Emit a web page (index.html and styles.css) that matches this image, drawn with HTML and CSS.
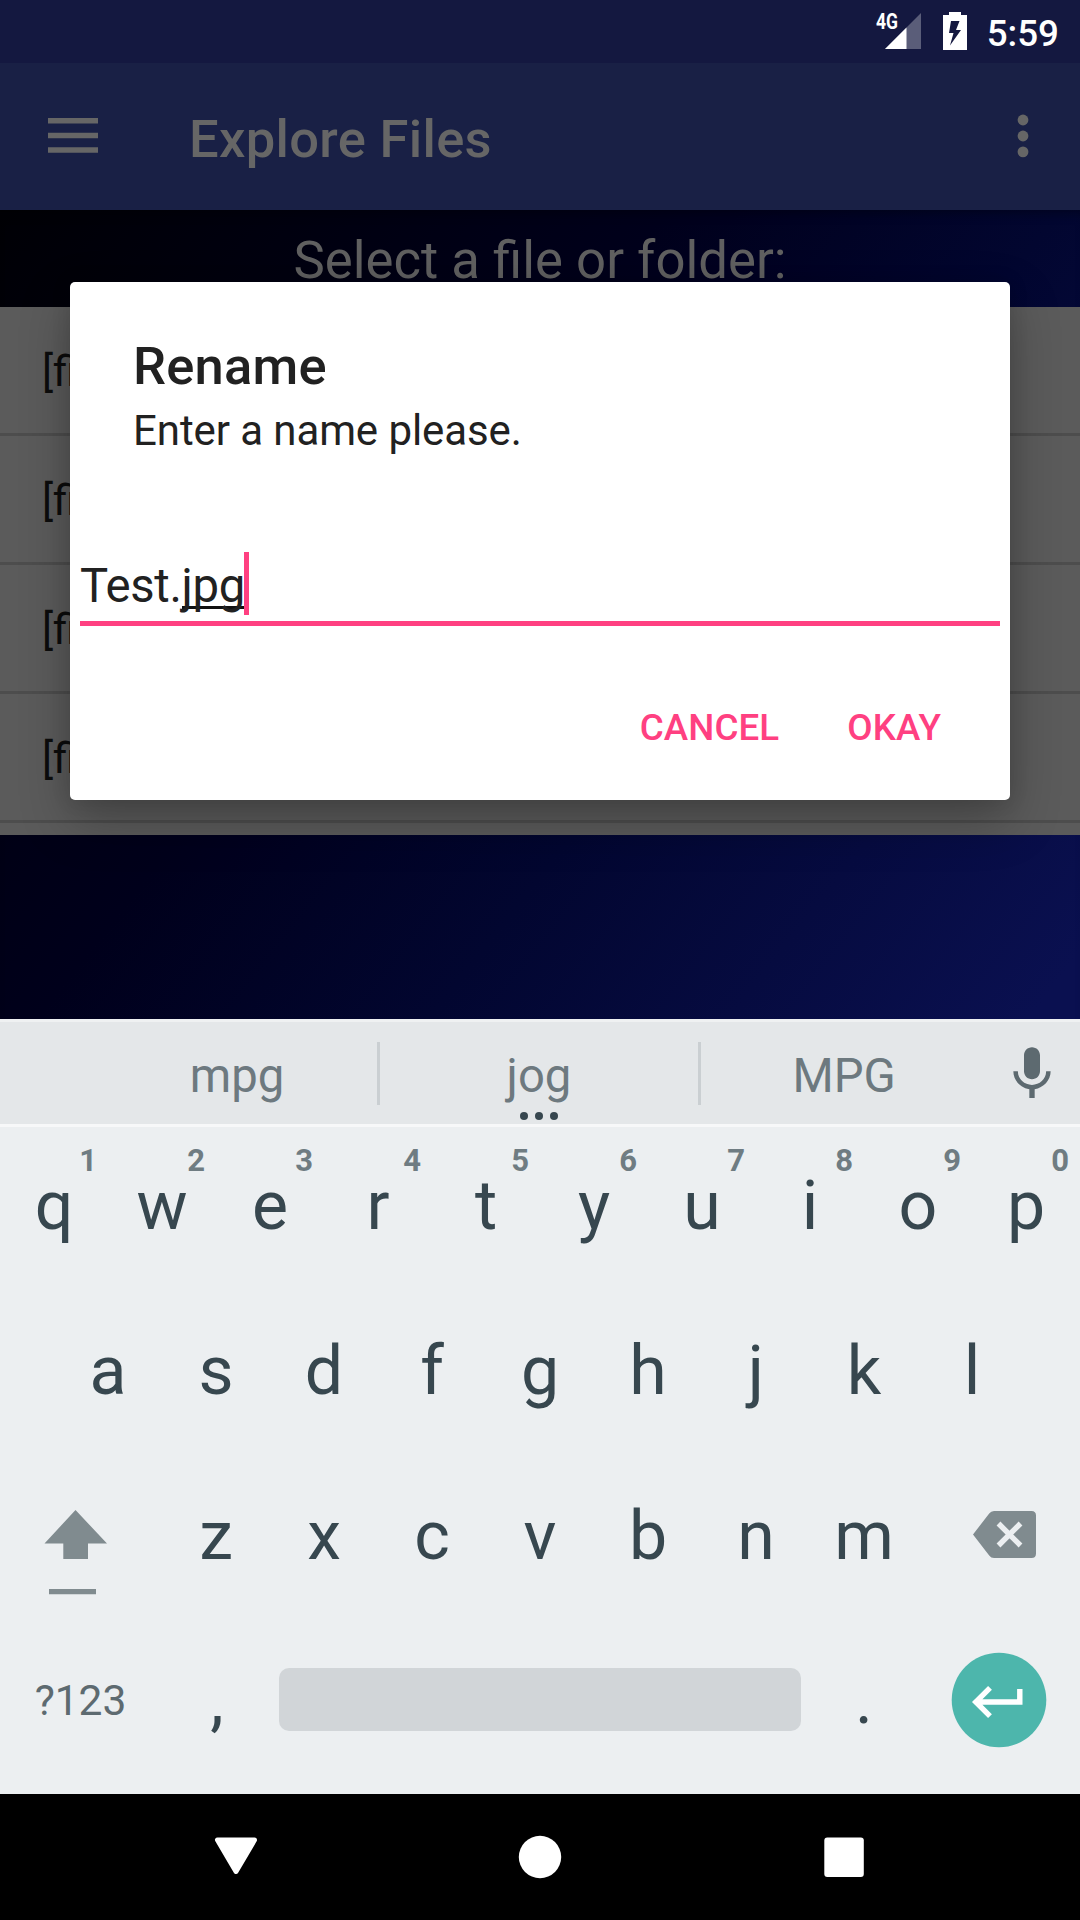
FILE: index.html
```html
<!DOCTYPE html>
<html lang="en">
<head>
<meta charset="utf-8">
<title>Explore Files</title>
<link rel="stylesheet" href="styles.css">
</head>
<body>
<div class="screen">
  <header class="status-bar">
    <svg class="signal" width="48" height="48" viewBox="0 -8 48 48">
      <path d="M46 1V37H10Z" fill="#fff" fill-opacity=".3"/>
      <path d="M31.5 15.5V37H10Z" fill="#fff"/>
      <text class="signal-label" x="1" y="17" textLength="22" lengthAdjust="spacingAndGlyphs">4G</text>
    </svg>
    <svg class="battery" width="24" height="38" viewBox="0 0 24 38">
      <path d="M0 3H6V0H18V3H24V38H0ZM8 9L6 21H10.500L7 33.500L18 18H13L16.500 9Z" fill="#fff" fill-rule="evenodd"/>
    </svg>
    <span class="clock">5:59</span>
  </header>

  <div class="toolbar">
    <svg class="menu-icon" width="50" height="35" viewBox="0 0 50 35"><path d="M0 0H50V5.500H0ZM0 14.700H50V20.200H0ZM0 29.300H50V34.800H0Z" fill="#666"/></svg>
    <h1 class="toolbar-title">Explore Files</h1>
    <svg class="more-icon" width="12" height="44" viewBox="0 0 12 44"><g fill="#666"><circle cx="6" cy="6" r="5.400"/><circle cx="6" cy="22" r="5.400"/><circle cx="6" cy="37.900" r="5.400"/></g></svg>
  </div>

  <main class="content">
    <p class="prompt">Select a file or folder:</p>
    <ul class="file-list">
      <li class="file-row">[fi</li>
      <li class="file-row">[fi</li>
      <li class="file-row">[fi</li>
      <li class="file-row">[fi</li>
    </ul>

    <section class="dialog">
      <h2 class="dialog-title">Rename</h2>
      <p class="dialog-message">Enter a name please.</p>
      <div class="field"><span>Test.</span><span class="composing">jpg</span><i class="caret"></i></div>
      <div class="dialog-actions"><span>CANCEL</span><span>OKAY</span></div>
    </section>
  </main>

  <div class="keyboard">
    <div class="suggestions">
      <span class="word word-left">mpg</span>
      <span class="word word-mid">jog
        <svg class="more-words" width="40" height="10" viewBox="0 0 40 10"><g fill="#37474f"><circle cx="5" cy="5" r="4"/><circle cx="20" cy="5" r="4"/><circle cx="35" cy="5" r="4"/></g></svg>
      </span>
      <span class="word word-right">MPG</span>
      <svg class="mic" width="64" height="64" viewBox="0 0 24 24" fill="#5d6a70"><path d="M12 14c1.660 0 3-1.340 3-3V5c0-1.660-1.340-3-3-3S9 3.340 9 5v6c0 1.660 1.340 3 3 3zM17.300 11c0 3-2.540 5.100-5.300 5.100S6.700 14 6.700 11H5c0 3.410 2.720 6.230 6 6.720V21h2v-3.280c3.280-.480 6-3.300 6-6.720h-1.700z"/></svg>
    </div>

    <div class="key-row row-top">
      <span class="key">q<sup class="hint">1</sup></span><span class="key">w<sup class="hint">2</sup></span><span class="key">e<sup class="hint">3</sup></span><span class="key">r<sup class="hint">4</sup></span><span class="key">t<sup class="hint">5</sup></span><span class="key">y<sup class="hint">6</sup></span><span class="key">u<sup class="hint">7</sup></span><span class="key">i<sup class="hint">8</sup></span><span class="key">o<sup class="hint">9</sup></span><span class="key">p<sup class="hint">0</sup></span>
    </div>
    <div class="key-row">
      <span class="key">a</span><span class="key">s</span><span class="key">d</span><span class="key">f</span><span class="key">g</span><span class="key">h</span><span class="key">j</span><span class="key">k</span><span class="key">l</span>
    </div>
    <div class="key-row">
      <span class="key key-side"><svg width="162" height="165" viewBox="0 0 162 165" fill="#808b8f"><path d="M75.500 57L107 90.500H88V106H63.300V90.500H44.500Z"/><path d="M49 136H96V141.300H49Z"/></svg></span>
      <span class="key">z</span><span class="key">x</span><span class="key">c</span><span class="key">v</span><span class="key">b</span><span class="key">n</span><span class="key">m</span>
      <span class="key key-side"><svg width="162" height="165" viewBox="0 0 162 165"><path d="M76 58H113.500Q118 58 118 62.500V100.500Q118 105 113.500 105H76Q73 105 71.200 102.500L55 81.500L71.200 60.500Q73 58 76 58Z" fill="#808b8f"/><path d="M80.500 70.500L102.500 92.500M102.500 70.500L80.500 92.500" stroke="#eceff1" stroke-width="5.400"/></svg></span>
    </div>
    <div class="key-row row-bottom">
      <span class="key key-symbols">?123</span>
      <span class="key key-comma">,</span>
      <span class="key key-space"><i class="space-bar"></i></span>
      <span class="key">.</span>
      <span class="key key-side"><svg width="162" height="165" viewBox="0 0 162 165"><circle cx="81" cy="82" r="47.300" fill="#4db6ac"/><path d="M101.800 71V84H58M72 69.800L57.800 84L72 98.200" fill="none" stroke="#fff" stroke-width="5.400"/></svg></span>
    </div>
  </div>

  <nav class="nav-bar">
    <svg width="44" height="44" viewBox="0 0 44 44"><path d="M3.500 5H40.500L22 36.500Z" fill="#fff" stroke="#fff" stroke-width="5" stroke-linejoin="round"/></svg>
    <svg width="44" height="44" viewBox="0 0 44 44"><circle cx="22" cy="22" r="21.200" fill="#fff"/></svg>
    <svg width="44" height="44" viewBox="0 0 44 44"><rect x="2.300" y="2.500" width="39.500" height="39.500" rx="3" fill="#fff"/></svg>
  </nav>
</div>
</body>
</html>
```
FILE: styles.css
```css
* { box-sizing: border-box; margin: 0; padding: 0; }

body {
  width: 1080px;
  height: 1920px;
  overflow: hidden;
  background: #000;
  font-family: Roboto, "Noto Sans", sans-serif;
  font-weight: 400;
}

.screen { display: flex; flex-direction: column; height: 1920px; }
svg { display: block; flex: none; }

/* status bar */
.status-bar {
  display: flex;
  align-items: flex-start;
  justify-content: flex-end;
  height: 63px;
  padding: 4px 21px 0 0;
  background: #141840;
  color: #fff;
}
.signal-label { fill: #fff; font-size: 22.500px; font-weight: 700; }
.battery { margin: 8px 0 0 20px; }
.clock {
  margin: 8px 0 0 20px;
  font-size: 36.750px;
  font-weight: 500;
  line-height: 43px;
}

/* app bar */
.toolbar {
  display: flex;
  align-items: center;
  height: 147px;
  padding: 0 51.500px 0 48px;
  background: #192045;
}
.menu-icon { margin-top: -2px; }
.more-icon { margin-top: -1px; }
.toolbar-title {
  flex: 1;
  margin-left: 91px;
  padding-top: 4px;
  color: #666;
  font-size: 52.500px;
  font-weight: 500;
  letter-spacing: .32px;
  line-height: 62px;
}

/* file browser */
.content {
  position: relative;
  height: 809px;
  background: linear-gradient(128deg, #000005 0%, #00001b 39%, #020630 62%, #0a1050 97%);
  box-shadow: inset 0 10px 12px -8px rgba(0, 0, 0, .4);
}
.prompt {
  height: 97px;
  padding-top: 20px;
  color: #606060;
  font-size: 52.700px;
  line-height: 60px;
  text-align: center;
}
.file-list { height: 528px; background: #5b5b5b; list-style: none; overflow: hidden; }
.file-row {
  height: 129px;
  padding: 3px 0 0 42px;
  border-bottom: 3px solid #4d4d4d;
  color: #0c0c0c;
  font-size: 42px;
  line-height: 123px;
}

/* rename dialog */
.dialog {
  position: absolute;
  left: 70px;
  top: 72px;
  width: 940px;
  height: 518px;
  padding-top: 53px;
  border-radius: 5px;
  background: #fff;
  color: #212121;
  box-shadow: 0 20px 50px rgba(0, 0, 0, .28), 0 0 20px rgba(0, 0, 0, .1);
}
.dialog-title {
  padding-left: 63px;
  font-size: 52.500px;
  font-weight: 500;
  letter-spacing: .2px;
  line-height: 62px;
}
.dialog-message {
  padding: 9px 0 0 63px;
  font-size: 42px;
  letter-spacing: -.09px;
  line-height: 50px;
}
.field {
  display: flex;
  height: 74px;
  margin: 96px 10px 0;
  border-bottom: 5px solid #ff4081;
  font-size: 47.250px;
  letter-spacing: -.35px;
  line-height: 69px;
}
.composing {
  height: 57px;
  border-bottom: 3px solid #111;
}
.caret { width: 5px; height: 63px; margin-left: -1px; background: #ff4081; }
.dialog-actions {
  display: flex;
  justify-content: flex-end;
  gap: 68px;
  padding: 80px 69px 0 0;
  color: #ff4081;
  font-size: 36.750px;
  font-weight: 500;
  letter-spacing: .1px;
  line-height: 44px;
}

/* keyboard */
.keyboard { height: 775px; background: #eceff1; color: #37474f; }
.suggestions {
  display: flex;
  height: 108px;
  padding-left: 95px;
  border-top: 3px solid #eff1f2;
  border-bottom: 3px solid #f7f8f9;
  background: #e4e7e9;
  color: #6d797f;
}
.word {
  position: relative;
  height: 63px;
  margin-top: 20px;
  font-size: 47.250px;
  line-height: 69px;
  text-align: center;
}
.word-left { width: 282px; padding-left: 2px; }
.word-mid { width: 324px; border: solid #cacfd2; border-width: 0 3px; }
.word-right { width: 286px; }
.more-words { position: absolute; left: 139px; top: 69px; }
.mic { margin: 20px 0 0 13px; }

.key-row { display: flex; justify-content: center; height: 165px; }
.row-top { height: 161px; }
.row-top .key { height: 158px; line-height: 158px; }
.key {
  position: relative;
  width: 108px;
  height: 165px;
  font-size: 68px;
  line-height: 167px;
  text-align: center;
}
.row-top .hint {
  position: absolute;
  right: 11px;
  top: 15px;
  color: #6f7c82;
  font-size: 31px;
  font-weight: 700;
  line-height: 37px;
}
.row-bottom .key { line-height: 165px; }
.key-side { width: 162px; }
.key-symbols { width: 162px; padding-right: 1px; font-size: 42.500px; color: #5d6a70; }
.key-comma { padding-left: 2px; }
.key-space { display: flex; align-items: center; width: 540px; padding: 0 9px 2px; }
.space-bar { flex: 1; height: 63px; border-radius: 10px; background: #d1d5d8; }

/* navigation bar */
.nav-bar {
  display: flex;
  justify-content: center;
  align-items: center;
  gap: 260px;
  height: 126px;
  background: #000;
}
```
